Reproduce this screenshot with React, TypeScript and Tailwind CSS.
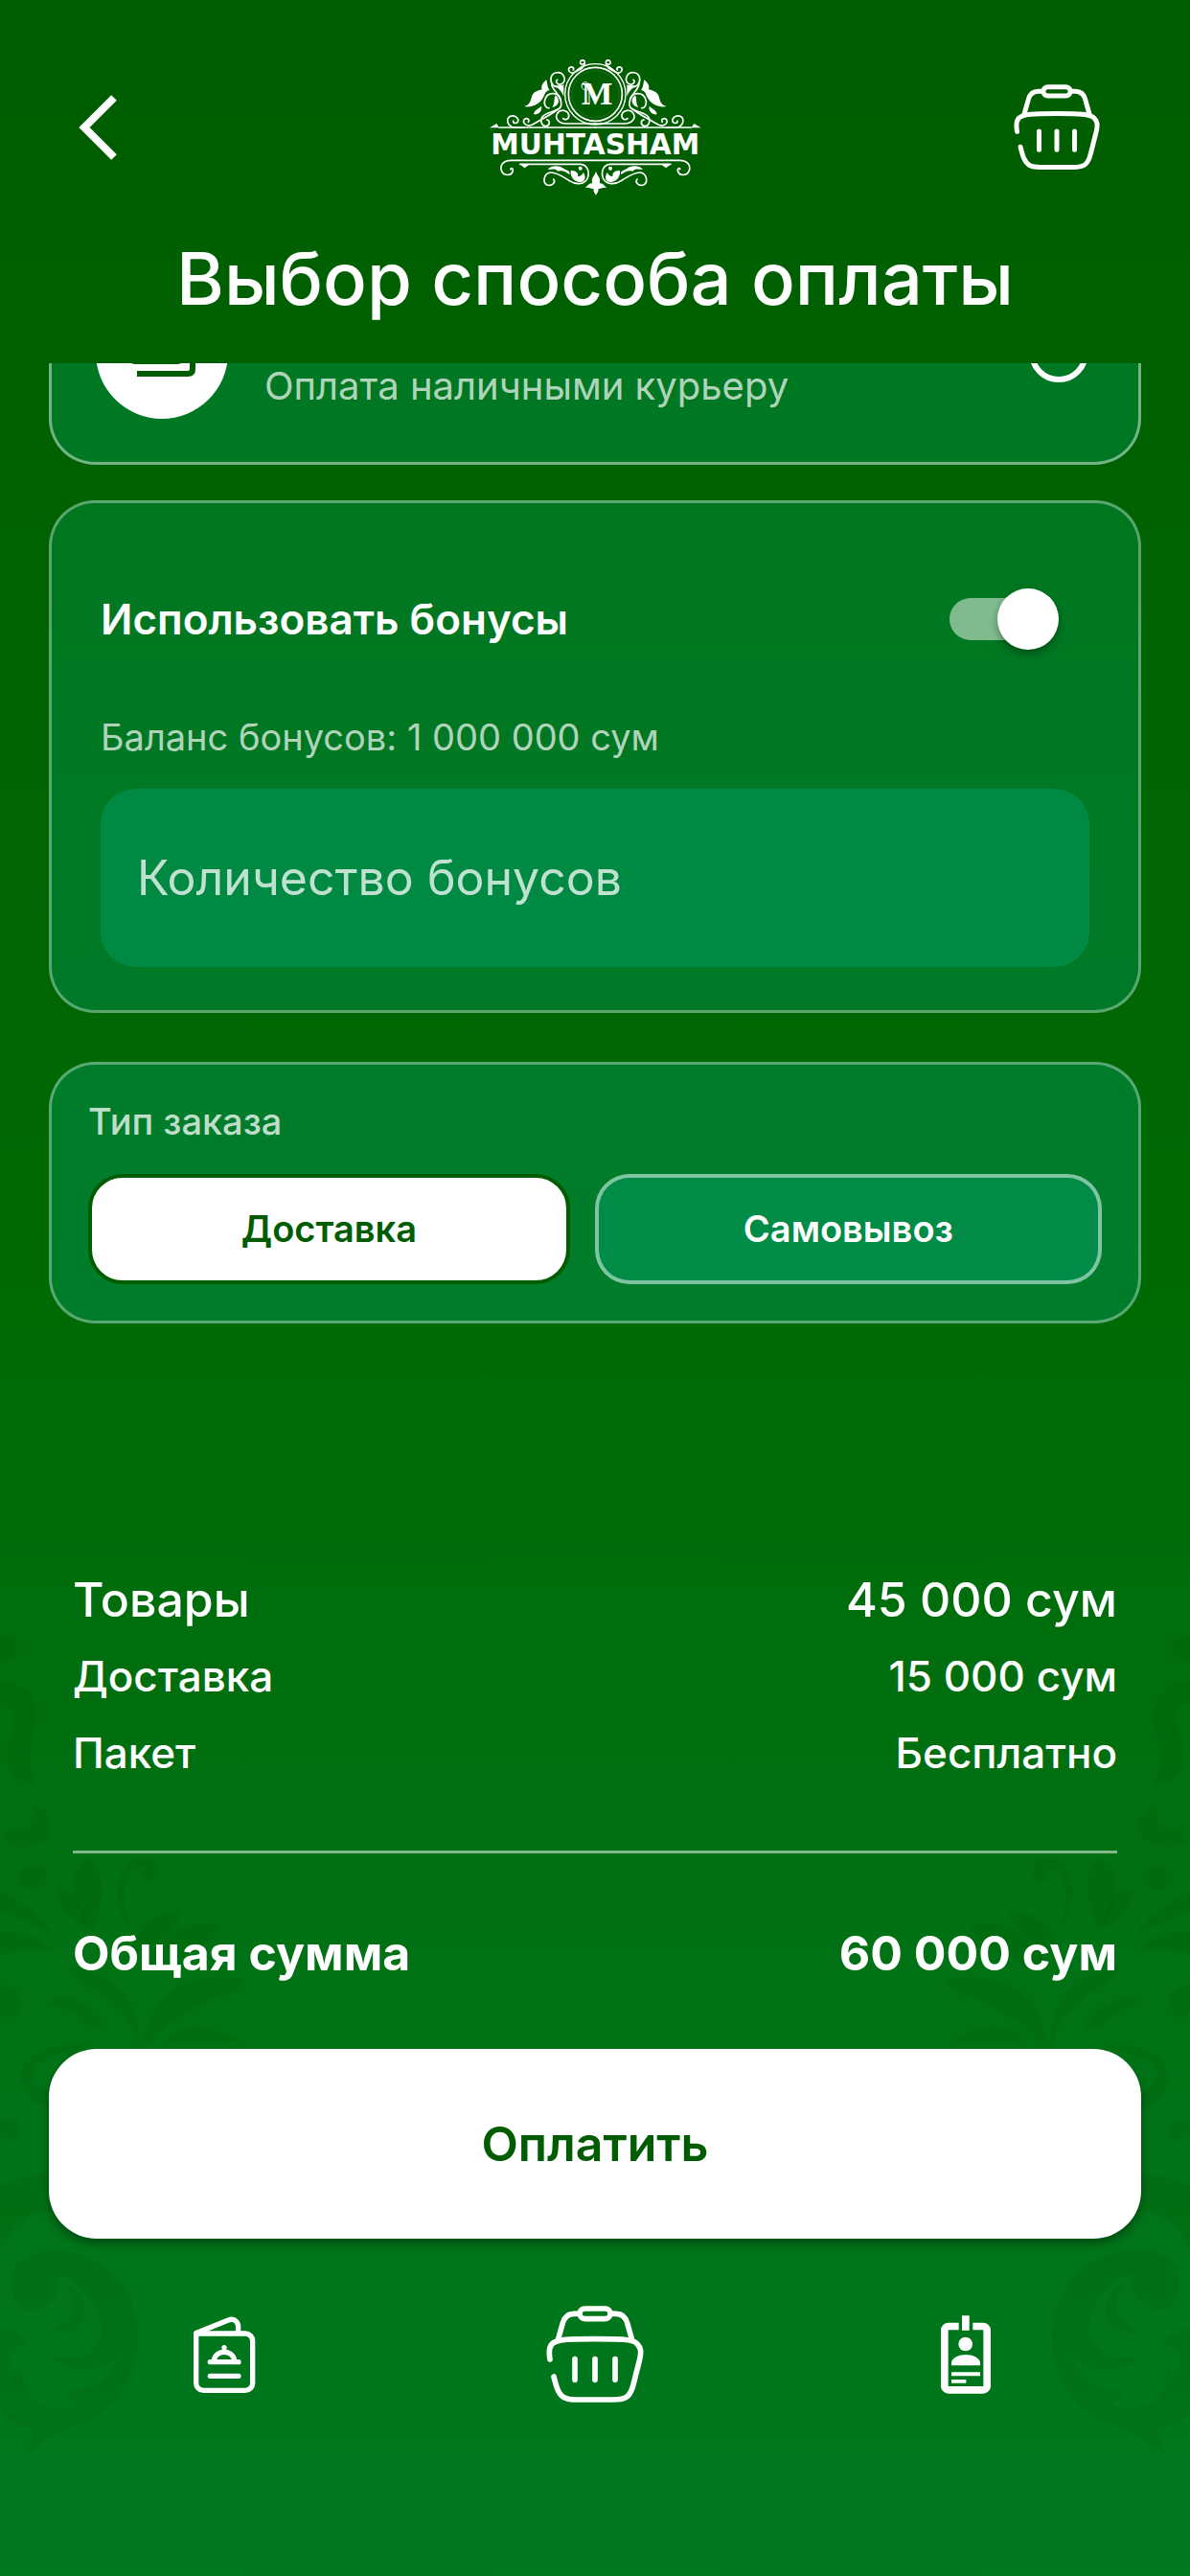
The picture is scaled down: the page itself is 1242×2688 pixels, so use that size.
import { useState } from 'react';

const orderTypes = [
    { id: 'delivery', label: 'Доставка' },
    { id: 'pickup', label: 'Самовывоз' },
];

const summary = [
    { label: 'Товары', value: '45 000 сум', size: 'text-[50px]' },
    { label: 'Доставка', value: '15 000 сум', size: 'text-[44px]' },
    { label: 'Пакет', value: 'Бесплатно', size: 'text-[44px]' },
];

function BasketIcon({ className }: { className?: string }) {
    return (
        <svg viewBox="90 77 306 306" className={className} fill="none" stroke="currentColor" strokeWidth="17" strokeLinecap="round" strokeLinejoin="round" aria-hidden="true">
            <rect x="195" y="86" width="96" height="32" rx="16" />
            <path d="M192 102H177C156 102 147 113 142 131L127 184" />
            <path d="M294 102H309C330 102 339 113 344 131L359 184" />
            <path d="M102 245C98 222 98 208 108 197C122 181 160 181 243 181C326 181 360 181 375 196C388 209 388 222 383 245L364 320C354 362 341 371 300 371H185C150 371 137 364 126 339C121 327 118 315 114 299" />
            <path d="M180 244V309M243 244V309M306 244V309" />
        </svg>
    );
}

function MenuIcon({ className }: { className?: string }) {
    return (
        <svg viewBox="121 102 206 252" className={className} fill="none" stroke="currentColor" strokeWidth="16" strokeLinecap="round" strokeLinejoin="round" aria-hidden="true">
            <path d="M135 162H289A23 23 0 0 1 312 185V317A23 23 0 0 1 289 340H158A23 23 0 0 1 135 317Z" />
            <path d="M137 160L236 120C254 113 267 124 267 142V160" />
            <path d="M179 251H268M179 295H268" />
            <path d="M191 246C197 211 249 211 255 246" />
            <circle cx="223" cy="206" r="8" fill="currentColor" stroke="none" />
        </svg>
    );
}

function BadgeIcon({ className }: { className?: string }) {
    return (
        <svg viewBox="149 102 168 252" className={className} fill="currentColor" aria-hidden="true">
            <path d="M211 128H179A24 24 0 0 0 155 152V326A24 24 0 0 0 179 350H287A24 24 0 0 0 311 326V152A24 24 0 0 0 287 128H255V151H288V327H178V151H211Z" />
            <path d="M221 106H244V152H221ZM188 283H278V295H188ZM188 306H234V317H188Z" />
            <circle cx="232" cy="195" r="22" />
            <path d="M188 262V254C188 238 214 228 233 228S278 238 278 254V262Z" />
        </svg>
    );
}

function CashIcon({ className }: { className?: string }) {
    return (
        <svg viewBox="0 0 84 60" className={className} fill="none" stroke="currentColor" strokeWidth="6" aria-hidden="true">
            <rect x="9" y="4" width="54" height="35" rx="5" />
            <circle cx="36" cy="21" r="8" />
            <path d="M16 52H69Q74 52 74 47V14" />
        </svg>
    );
}

// One half of the emblem, mirrored around x = 421
function LogoSide() {
    return (
        <g>
            <g fill="none" stroke="currentColor" strokeWidth="5" strokeLinecap="round">
                <path d="M364 102C376 98 388 88 388 76C388 67 376 66 374 74C372 80 378 84 383 80" />
                <path d="M386 86C370 90 366 104 352 108C340 110 334 98 340 92C347 86 356 92 352 99" />
                <path d="M312 150C292 158 280 140 282 125C285 104 313 101 322 118C330 134 318 147 306 144C297 140 297 132 302 130" />
                <path d="M284 142C286 166 318 178 314 210C310 232 270 226 255 246C246 262 256 276 267 275C280 272 280 256 269 255" />
                <path d="M312 190C306 168 272 166 264 190C257 207 268 220 276 218" />
                <path d="M300 225C280 240 245 258 224 270C208 278 192 266 198 255C204 246 218 254 211 262" />
                <path d="M421 267H330C303 267 294 248 302 235C311 220 335 225 338 240C340 252 328 258 320 251" />
                <path d="M200 279H165C145 274 140 252 155 244C170 238 184 252 178 262C172 268 163 266 164 258" />
                <path d="M120 279H421" />
                <path d="M421 382H158C130 382 121 400 128 416C135 432 160 431 163 414C164 406 157 405 156 410" />
                <path d="M185 394H375C398 396 404 420 396 440C384 460 358 458 340 446C320 434 300 418 280 420C258 424 256 452 270 459C286 464 298 450 290 441" />
            </g>
            <path d="M90 280L112 267L120 280Z" />
            <path d="M268 130C272 145 270 152 278 162C262 164 264 178 256 188C246 206 220 218 198 213C216 208 218 196 222 182C226 168 240 164 254 160C250 148 258 138 268 130Z" />
            <path d="M292 148C308 146 318 150 322 144V182C312 160 304 156 292 148Z" />
            <path d="M296 178C314 192 306 214 286 216C296 202 290 190 296 178ZM252 212C256 228 242 240 228 238C230 224 242 222 252 212Z" />
            <path d="M184 394H216L200 406ZM272 410C286 396 310 398 322 408C336 414 344 418 340 426C326 418 320 412 304 416C294 404 284 412 272 410Z" />
            <path d="M344 414C360 412 370 424 366 432C376 432 378 428 384 420C394 436 388 452 370 450C352 446 342 432 344 414Z" />
            <circle cx="374" cy="407" r="6" />
        </g>
    );
}

function Logo() {
    return (
        <svg viewBox="0 9 840 540" className="h-[180px] w-[280px]" fill="currentColor" role="img" aria-label="Muhtasham">
            <LogoSide />
            <g transform="matrix(-1 0 0 1 842 0)">
                <LogoSide />
            </g>
            <g fill="none" stroke="currentColor">
                <circle cx="421" cy="175" r="95" strokeWidth="4" />
                <circle cx="421" cy="175" r="84" strokeWidth="5" />
                <circle cx="421" cy="175" r="73" strokeWidth="2" strokeDasharray="2 6" opacity="0.6" />
                <path d="M400 160C384 168 374 152 380 142C388 132 402 138 402 152V206" strokeWidth="3" />
            </g>
            <text x="426" y="208" textAnchor="middle" fontFamily="'Liberation Serif', serif" fontWeight="700" fontSize="104">M</text>
            <text x="421" y="363" textAnchor="middle" fontFamily="'DejaVu Sans', sans-serif" fontWeight="700" fontSize="89">MUHTASHAM</text>
            <path d="M423 416C428 434 440 436 434 454C442 452 446 458 457 468C444 466 436 472 430 472C432 482 426 484 423 492C420 484 414 482 416 472C410 472 402 466 389 468C400 458 404 452 412 454C406 436 418 434 423 416Z" />
        </svg>
    );
}

function Ornament({ className }: { className?: string }) {
    return (
        <svg viewBox="0 1640 260 960" className={className} fill="#005a00" fillOpacity="0.16" aria-hidden="true">
            <path d="M0 1755C24 1752 42 1772 38 1800C34 1820 24 1832 38 1862C14 1860 2 1846 8 1820C14 1796 22 1782 0 1776Z" />
            <path d="M8 1905C26 1922 42 1894 32 1886C48 1884 58 1902 52 1914C42 1930 12 1930 2 1920Z" />
            <circle cx="6" cy="1720" r="12" />
            <path d="M18 1956C24 1942 46 1942 49 1956C50 1968 38 1976 28 1970C20 1968 16 1964 18 1956Z" />
            <path d="M92 2012C72 1986 70 1950 94 1938C114 1956 106 1990 98 2012Z" />
            <path d="M60 1970C78 1972 90 1990 92 2012C74 2004 60 1994 60 1970Z" />
            <path d="M132 2010C112 1976 124 1940 150 1938C168 1940 168 1964 154 1964C144 1962 148 1952 152 1950C132 1944 122 1974 136 2010Z" />
            <path d="M0 1974C24 1984 42 2000 56 2018C38 2012 18 2000 0 1994ZM0 2016C22 2014 38 2020 54 2034C34 2036 18 2034 0 2040Z" />
            <path d="M138 2030C144 1998 170 1998 190 1992C184 2016 166 2028 138 2038ZM154 2042C176 2010 206 2002 230 2010C218 2034 190 2042 158 2056Z" />
            <path d="M152 2132C154 2080 196 2056 256 2066C244 2086 214 2082 200 2098C184 2108 166 2114 158 2132Z" />
            <path d="M146 2132C144 2086 120 2062 74 2052C86 2074 112 2078 124 2096C136 2108 140 2116 142 2132Z" />
            <path d="M112 2118C84 2078 52 2078 56 2092C66 2096 82 2100 96 2116ZM170 2132C186 2110 216 2108 250 2130Z" />
            <path d="M0 2072C12 2070 26 2082 20 2096C12 2112 0 2104 0 2096Z" />
            <path d="M92 2136C60 2128 20 2144 22 2170C26 2192 42 2200 60 2200V2180C46 2186 26 2172 38 2156C52 2142 70 2142 92 2136Z" />
            <circle cx="11" cy="2222" r="12" />
            <path d="M0 2280C28 2270 44 2266 62 2266V2312C46 2300 18 2312 0 2346Z" />
            <path fillRule="evenodd" d="M14 2366C40 2334 104 2346 132 2390C164 2450 132 2514 80 2530C60 2538 46 2544 26 2562C34 2542 38 2534 30 2532C10 2530 0 2518 0 2508V2430C12 2430 24 2438 28 2446C8 2450 4 2470 18 2476C24 2466 26 2468 24 2480C28 2512 60 2520 86 2508C74 2506 68 2500 72 2494C98 2496 118 2480 126 2454C116 2474 72 2482 52 2458C72 2464 92 2462 104 2442C112 2418 92 2384 60 2372C68 2392 48 2412 28 2410C14 2406 8 2392 14 2366Z" />
            <path d="M68 2382C96 2396 98 2434 60 2434C58 2430 60 2426 64 2426C82 2416 80 2400 68 2382Z" />
        </svg>
    );
}

export default function App() {
    const [useBonuses, setUseBonuses] = useState(true);
    const [bonusAmount, setBonusAmount] = useState('');
    const [orderType, setOrderType] = useState('delivery');

    return (
        <div className="relative flex min-h-screen flex-col overflow-hidden bg-linear-to-b from-[#005c00] via-[#006a04] to-[#00781f] font-['Inter',sans-serif] text-white">
            <Ornament className="pointer-events-none absolute bottom-[88px] left-0 h-[960px] w-[260px]" />
            <Ornament className="pointer-events-none absolute right-0 bottom-[88px] h-[960px] w-[260px] -scale-x-100" />

            <header className="px-20 pt-[43px] pb-11">
                <div className="grid grid-cols-[1fr_280px_1fr] items-center">
                    <button type="button" aria-label="Назад" className="justify-self-start">
                        <svg viewBox="0 0 48 70" className="h-[70px] w-12" fill="none" stroke="currentColor" strokeWidth="8" aria-hidden="true">
                            <path d="M39 4L8 35L39 66" />
                        </svg>
                    </button>
                    <Logo />
                    <button type="button" aria-label="Корзина" className="flex w-[118px] justify-center justify-self-end">
                        <BasketIcon className="size-[90px]" />
                    </button>
                </div>
                <h1 className="mt-[22px] text-center text-[76px] leading-[90px] font-medium whitespace-nowrap">Выбор способа оплаты</h1>
            </header>

            <main className="relative flex-1 px-[51px]">
                {/* Payment method, scrolled half under the header */}
                <div className="flex h-[106px] flex-col justify-end overflow-hidden">
                    <label className="flex shrink-0 items-center rounded-[48px] border-[3px] border-white/45 bg-[#007722] px-[46px] py-[45px]">
                        <span className="flex size-[138px] shrink-0 items-center justify-center rounded-full bg-white text-[#005c00]">
                            <CashIcon className="h-[60px] w-[84px]" />
                        </span>
                        <span className="ml-[38px] flex-1 self-end pb-3 text-[40px] leading-[44px] text-white/70">Оплата наличными курьеру</span>
                        <input type="radio" name="payment" aria-label="Оплата наличными курьеру" className="mr-1.5 size-[62px] shrink-0 appearance-none rounded-full border-[6px] border-white" />
                    </label>
                </div>

                <section className="mt-[37px] rounded-[48px] border-[3px] border-white/35 bg-linear-to-b from-[#00761e] to-[#007a28] px-[51px] pt-[89px] pb-[45px]">
                    <div className="flex items-center justify-between">
                        <label htmlFor="use-bonuses" className="text-[44px] leading-[64px] font-semibold">Использовать бонусы</label>
                        <input
                            id="use-bonuses"
                            type="checkbox"
                            role="switch"
                            checked={useBonuses}
                            onChange={(e) => setUseBonuses(e.target.checked)}
                            className="relative mr-8 h-16 w-[114px] appearance-none before:absolute before:top-[10px] before:left-0 before:h-11 before:w-[106px] before:rounded-full before:bg-white/50 after:absolute after:top-0 after:left-0 after:size-16 after:rounded-full after:bg-white after:shadow-[0_4px_8px_rgba(0,0,0,0.35)] checked:after:left-[50px]"
                        />
                    </div>
                    <label htmlFor="bonus-amount" className="mt-[63px] block text-[38px] leading-[56px] text-white/70">Баланс бонусов: 1 000 000 сум</label>
                    <input
                        id="bonus-amount"
                        type="text"
                        inputMode="numeric"
                        placeholder="Количество бонусов"
                        value={bonusAmount}
                        onChange={(e) => setBonusAmount(e.target.value)}
                        className="mt-[26px] block h-[186px] w-full rounded-[36px] bg-[#008942] px-[38px] text-[50px] placeholder:text-white/75"
                    />
                </section>

                <section className="mt-[51px] rounded-[48px] border-[3px] border-white/35 bg-[#007c2a] px-[38px] pt-[34px] pb-[38px]">
                    <h2 className="text-[38px] leading-[50px] font-medium text-white/75">Тип заказа</h2>
                    <div className="mt-[30px] grid grid-cols-[19fr_20fr] gap-[26px]">
                        {orderTypes.map((type) => (
                            <button
                                key={type.id}
                                type="button"
                                aria-pressed={orderType === type.id}
                                onClick={() => setOrderType(type.id)}
                                className={`h-[115px] rounded-[36px] border-4 text-[38px] font-semibold ${orderType === type.id ? 'border-[#005c00] bg-white text-[#005c00]' : 'border-white/50 bg-[#008b46] text-white'}`}
                            >
                                {type.label}
                            </button>
                        ))}
                    </div>
                </section>
            </main>

            <footer className="relative px-[51px]">
                <div className="px-[25px]">
                    <dl>
                        {summary.map((row) => (
                            <div key={row.label} className={`flex justify-between leading-[80px] font-medium ${row.size}`}>
                                <dt>{row.label}</dt>
                                <dd>{row.value}</dd>
                            </div>
                        ))}
                        <div className="mt-[62px] flex justify-between border-t-[3px] border-white/50 pt-16 text-[50px] leading-[80px] font-bold">
                            <dt>Общая сумма</dt>
                            <dd>60 000 сум</dd>
                        </div>
                    </dl>
                </div>
                <button type="button" className="mt-[60px] h-[198px] w-full rounded-[50px] bg-white text-[50px] font-semibold text-[#005c00] shadow-[0_5px_10px_rgba(0,0,0,0.35)]">
                    Оплатить
                </button>
            </footer>

            <nav className="relative grid h-[352px] grid-cols-3 items-start px-[41px] pt-[70px]">
                <a href="#menu" aria-label="Меню" className="flex h-[102px] items-center justify-center">
                    <MenuIcon className="h-[84px]" />
                </a>
                <a href="#basket" aria-label="Корзина" className="flex h-[102px] items-center justify-center">
                    <BasketIcon className="size-[102px]" />
                </a>
                <a href="#profile" aria-label="Профиль" className="flex h-[102px] items-center justify-center">
                    <BadgeIcon className="h-[84px]" />
                </a>
            </nav>
        </div>
    );
}
